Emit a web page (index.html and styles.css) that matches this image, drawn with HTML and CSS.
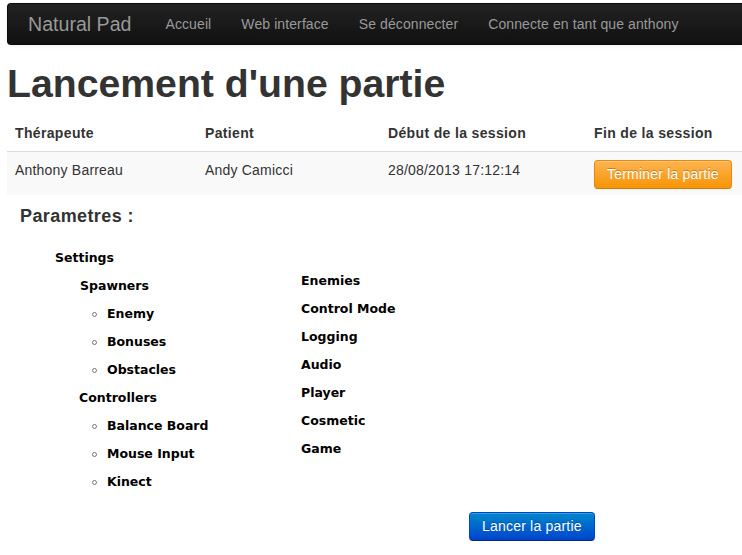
FILE: index.html
```html
<!DOCTYPE html>
<html lang="fr">
<head>
<meta charset="utf-8">
<title>Lancement d'une partie</title>
<link rel="stylesheet" href="styles.css">
</head>
<body>
<div class="page">
  <nav class="navbar">
    <span class="brand">Natural Pad</span>
    <ul class="nav">
      <li>Accueil</li>
      <li>Web interface</li>
      <li>Se déconnecter</li>
      <li>Connecte en tant que anthony</li>
    </ul>
  </nav>

  <h1 class="title">Lancement d'une partie</h1>

  <table class="session">
    <colgroup>
      <col class="c1"><col class="c2"><col class="c3"><col class="c4">
    </colgroup>
    <thead>
      <tr><th>Thérapeute</th><th>Patient</th><th>Début de la session</th><th>Fin de la session</th></tr>
    </thead>
    <tbody>
      <tr>
        <td>Anthony Barreau</td>
        <td>Andy Camicci</td>
        <td>28/08/2013 17:12:14</td>
        <td><button class="btn btn-warning">Terminer la partie</button></td>
      </tr>
    </tbody>
  </table>

  <h3 class="params">Parametres :</h3>

  <div class="tree">
    <ul class="col-left">
      <li><span class="node">Settings</span>
        <ul class="sub">
          <li><span class="node">Spawners</span>
            <ul class="leaves">
              <li>Enemy</li>
              <li>Bonuses</li>
              <li>Obstacles</li>
            </ul>
          </li>
          <li class="ctrl"><span class="node">Controllers</span>
            <ul class="leaves">
              <li>Balance Board</li>
              <li>Mouse Input</li>
              <li>Kinect</li>
            </ul>
          </li>
        </ul>
      </li>
    </ul>
    <ul class="col-right">
      <li>Enemies</li>
      <li>Control Mode</li>
      <li>Logging</li>
      <li>Audio</li>
      <li>Player</li>
      <li>Cosmetic</li>
      <li>Game</li>
    </ul>
  </div>

  <div class="actions">
    <button class="btn btn-primary">Lancer la partie</button>
  </div>
</div>
</body>
</html>
```

FILE: styles.css
```css
html, body {
  margin: 0;
  padding: 0;
  background: #fff;
  overflow: hidden;
}
body {
  font-family: "Liberation Sans", Arial, sans-serif;
  font-size: 14px;
  line-height: 20px;
  color: #333;
}
.page {
  padding: 3px 0 0 7px;
}

/* navbar */
.navbar {
  display: flex;
  align-items: center;
  min-height: 40px;
  background: linear-gradient(to bottom, #222222, #111111);
  border: 1px solid #0c0c0c;
  border-right: none;
  border-radius: 4px 0 0 4px;
  box-shadow: 0 1px 4px rgba(0,0,0,0.065);
}
.brand {
  font-size: 19.6px;
  line-height: 20px;
  padding: 10px 19px 10px 20px;
  color: #999;
}
.nav {
  display: flex;
  list-style: none;
  margin: 0;
  padding: 0;
}
.nav li {
  padding: 10px 15px;
  color: #999;
  line-height: 20px;
  letter-spacing: 0.1px;
}

/* title */
.title {
  margin: 19px 0 0 0;
  font-size: 39.2px;
  line-height: 40px;
  font-weight: bold;
  color: #333;
}

/* table */
.session {
  margin-top: 11px;
  width: 735px;
  table-layout: fixed;
  border-collapse: collapse;
  border-spacing: 0;
}
.c1 { width: 190px; }
.c2 { width: 183px; }
.c3 { width: 206px; }
.c4 { width: 156px; }
.session th {
  text-align: left;
  font-weight: bold;
  padding: 8px;
  line-height: 20px;
  vertical-align: bottom;
  letter-spacing: 0.35px;
}
.session td {
  padding: 8px 8px 6px;
  line-height: 20px;
  vertical-align: top;
  border-top: 1px solid #dddddd;
  background: #f9f9f9;
  letter-spacing: 0.2px;
}

/* buttons */
.btn {
  font-family: "Liberation Sans", Arial, sans-serif;
  font-size: 14px;
  line-height: 19px;
  padding: 4px 12px 4px;
  border-radius: 4px;
  color: #fff;
  letter-spacing: 0.2px;
  text-shadow: 0 -1px 0 rgba(0,0,0,0.25);
  cursor: pointer;
  box-shadow: inset 0 1px 0 rgba(255,255,255,0.2), 0 1px 2px rgba(0,0,0,0.05);
}
.btn-warning {
  background: linear-gradient(to bottom, #fbb450, #f89406);
  border: 1px solid #e58a0c;
  border-bottom-color: #c87d0c;
}
.btn-primary {
  background: linear-gradient(to bottom, #0088cc, #0044cc);
  border: 1px solid #0044cc;
  border-bottom-color: #002a80;
}

/* parameters */
.params {
  margin: 11px 0 0 13px;
  font-size: 18px;
  line-height: 20px;
  font-weight: bold;
  color: #333;
  letter-spacing: 0.4px;
}

.tree {
  display: flex;
  margin-top: 18px;
  padding-left: 48px;
  font-family: "DejaVu Sans", Verdana, sans-serif;
  font-weight: bold;
  font-size: 12.5px;
  line-height: 28px;
  color: #000;
}
.tree ul {
  list-style: none;
  margin: 0;
  padding: 0;
}
.col-left {
  width: 246px;
}
.tree .col-right {
  padding-top: 23px;
}
.tree .sub {
  padding-left: 25px;
}
.ctrl {
  margin-left: -1px;
}
.tree .leaves {
  padding-left: 27px;
}
.ctrl .leaves {
  padding-left: 28px;
}
.leaves li {
  position: relative;
}
.leaves li::before {
  content: "";
  position: absolute;
  left: -15px;
  top: 12px;
  width: 3px;
  height: 3px;
  border: 1px solid #777;
  border-radius: 50%;
}

.actions {
  margin-top: 16px;
  padding-left: 462px;
}
```
